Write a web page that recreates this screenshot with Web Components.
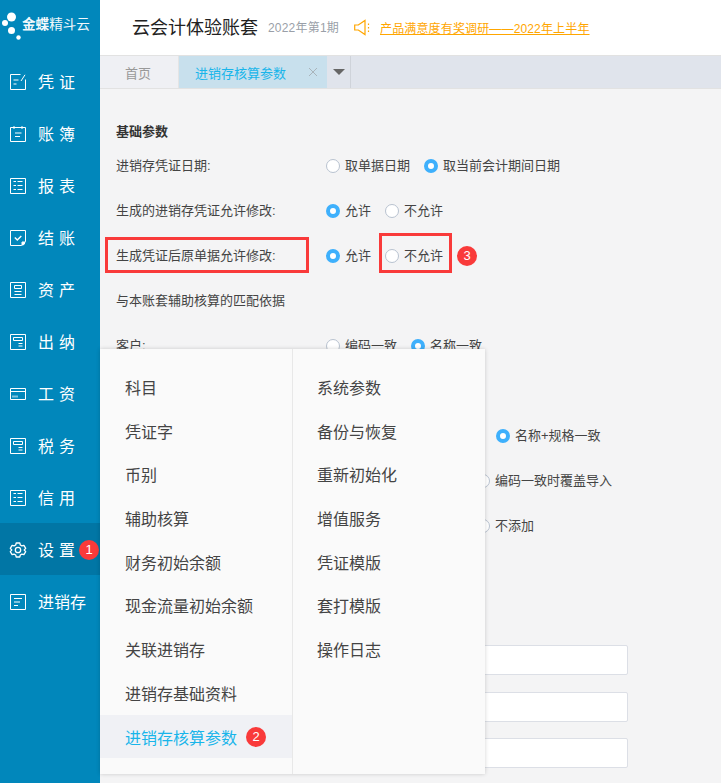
<!DOCTYPE html>
<html lang="zh">
<head>
<meta charset="utf-8">
<title>进销存核算参数</title>
<style>
html, body { margin: 0; height: 100%; }
body { font-family: "Liberation Sans", "Noto Sans CJK SC", sans-serif; overflow: hidden; }
</style>
</head>
<body>
<app-shell>
  <side-bar slot="side">
    <nav-item icon="edit">凭证</nav-item>
    <nav-item icon="book">账簿</nav-item>
    <nav-item icon="list">报表</nav-item>
    <nav-item icon="check">结账</nav-item>
    <nav-item icon="asset">资产</nav-item>
    <nav-item icon="cash">出纳</nav-item>
    <nav-item icon="card">工资</nav-item>
    <nav-item icon="cash">税务</nav-item>
    <nav-item icon="list">信用</nav-item>
    <nav-item icon="gear" active badge="1">设置</nav-item>
    <nav-item icon="lines" tight>进销存</nav-item>
  </side-bar>
  <top-bar slot="main"></top-bar>
  <tab-bar slot="main"></tab-bar>
  <param-form slot="main">
    <h-title>基础参数</h-title>
    <param-row label="进销存凭证日期:">
      <radio-opt>取单据日期</radio-opt>
      <radio-opt checked>取当前会计期间日期</radio-opt>
    </param-row>
    <param-row label="生成的进销存凭证允许修改:">
      <radio-opt checked>允许</radio-opt>
      <radio-opt>不允许</radio-opt>
    </param-row>
    <param-row label="生成凭证后原单据允许修改:" mark>
      <radio-opt checked>允许</radio-opt>
      <radio-opt mark>不允许</radio-opt>
      <num-badge>3</num-badge>
    </param-row>
    <param-row label="与本账套辅助核算的匹配依据"></param-row>
    <param-row label="客户:">
      <radio-opt>编码一致</radio-opt>
      <radio-opt checked>名称一致</radio-opt>
    </param-row>
    <param-row></param-row>
    <param-row indent="170">
      <radio-opt checked>名称+规格一致</radio-opt>
    </param-row>
    <param-row indent="150">
      <radio-opt>编码一致时覆盖导入</radio-opt>
    </param-row>
    <param-row indent="150">
      <radio-opt>不添加</radio-opt>
    </param-row>
    <input-stack></input-stack>
  </param-form>
  <setting-menu slot="over"></setting-menu>
</app-shell>

<script>
// iconos del menu lateral
const ICONS = {
  edit: '<path d="M10.500 .5H.5v15h15V5.500"/><path d="M15 .8 11 7"/><path d="M3.500 6h5M3.500 10h3"/>',
  book: '<path d="M.5 1.500h15v14H.5z"/><path d="M4 0v3M12 0v3M5 7h6.500M5 10.500h5"/>',
  list: '<path d="M.5 .5h15v15H.5z"/><path d="M3.500 3.500h2.500M7.500 3.500h5M3.500 7.500h2.500M7.500 7.500h5M3.500 11.500h2.500M7.500 11.500h5"/>',
  check: '<path d="M15.500 11.500V.5H.5v15h11z"/><path d="M12 15.500v-3.500h3.500" /><path d="M12.500 12.500h2v1.500l-1.500 1h-.5z" fill="#fff"/><path d="M4.800 7.500l2.500 2.500 4-4" stroke-width="1.400"/>',
  asset: '<path d="M.5 .5h15v15H.5z"/><path d="M4.500 3.500h7v3h-7zM4.500 9.500h7M4.500 12.500h7"/>',
  cash: '<path d="M.5 .5h15v15H.5z"/><path d="M3.500 3.500h9v3h-9zM8.500 9.500h4M8.500 12h4"/>',
  card: '<path d="M.5 2.500h15v11H.5z"/><path d="M.5 5.500h15"/><path d="M2.500 10.500h5.500" stroke-width="2" stroke-dasharray="1 1"/>',
  gear: '<path d="M6.200 1h3.600l.5 2 1.600.9 2-.6 1.800 3.100L14.200 8l1.500 1.600-1.800 3.100-2-.6-1.600.9-.5 2H6.200l-.5-2-1.600-.9-2 .6L.3 9.600 1.800 8 .3 6.400l1.800-3.100 2 .6 1.600-.9z" stroke-width="1.300" stroke-linejoin="round"/><circle cx="8" cy="8" r="2.700" stroke-width="1.300"/>',
  lines: '<path d="M.5 .5h15v15H.5z"/><path d="M4 4.500h8M4 8h6M4 11.500h4"/>'
};

class NumBadge extends HTMLElement {
  constructor() {
    super();
    this.attachShadow({mode: 'open'}).innerHTML = `
    <style>
      :host { display: inline-flex; width: 20px; height: 20px; border-radius: 50%; background: #f93a3a; color: #fff;
              align-items: center; justify-content: center; font-size: 13px; line-height: 20px; flex: none; }
    </style><slot></slot>`;
  }
}
/////////////////////////////////////////////////////////////////////
class AppShell extends HTMLElement {
  constructor() {
    super();
    this.attachShadow({mode: 'open'}).innerHTML = `
    <style>
      :host { display: grid; grid-template-columns: 100px 1fr; height: 783px; position: relative; overflow: hidden; background: #f4f4f5; }
      .main { display: flex; flex-direction: column; min-width: 0; }
    </style>
    <slot name="side"></slot>
    <div class="main"><slot name="main"></slot></div>
    <slot name="over"></slot>`;
  }
}
/////////////////////////////////////////////////////////////////////
class SideBar extends HTMLElement {
  constructor() {
    super();
    this.attachShadow({mode: 'open'}).innerHTML = `
    <style>
      :host { display: block; background: #0187bb; color: #fff; }
      .logo { height: 55px; display: flex; align-items: center; position: relative; }
      svg { position: absolute; left: 0; top: 8px; }
      .name { margin: 0 0 5px 22px; font-size: 13.600px; line-height: 16px; white-space: nowrap; color: #f2f9fc; }
      b { font-weight: 700; }
    </style>
    <div class="logo">
      <svg width="22" height="36" viewBox="0 0 22 36" fill="#fff">
        <circle cx="11.500" cy="9" r="4.500"/><circle cx="5" cy="15" r="3"/><circle cx="11.500" cy="22.500" r="3.500"/><circle cx="18.500" cy="29.500" r="2.200"/>
      </svg>
      <div class="name"><b>金蝶</b>精斗云</div>
    </div>
    <slot></slot>`;
  }
}

class NavItem extends HTMLElement {
  connectedCallback() {
    if (this.shadowRoot) return;
    const icon = ICONS[this.getAttribute('icon')] || '';
    const badge = this.getAttribute('badge');
    this.attachShadow({mode: 'open'}).innerHTML = `
    <style>
      :host { display: flex; align-items: center; height: 52px; position: relative; font-size: 16px; }
      :host([active]) { background: #0176a5; }
      svg { margin: 2px 0 0 10px; flex: none; fill: none; stroke: #fff; stroke-width: 1; overflow: visible; }
      .txt { margin-left: 12px; padding-top: 4px; letter-spacing: 5px; line-height: 20px; white-space: nowrap; }
      :host([tight]) .txt { letter-spacing: 0; }
      num-badge { position: absolute; left: 79px; top: 17px; }
    </style>
    <svg width="16" height="16" viewBox="0 0 16 16">${icon}</svg>
    <span class="txt"><slot></slot></span>
    ${badge ? `<num-badge>${badge}</num-badge>` : ''}`;
  }
}
/////////////////////////////////////////////////////////////////////
class TopBar extends HTMLElement {
  constructor() {
    super();
    this.attachShadow({mode: 'open'}).innerHTML = `
    <style>
      :host { display: flex; align-items: center; height: 55px; background: #fff; padding-left: 32px; flex: none; }
      .t { font-size: 18px; color: #222; line-height: 24px; }
      .p { font-size: 12px; color: #9a9fa8; margin-left: 10px; line-height: 16px; white-space: nowrap; letter-spacing: .2px; }
      svg { margin-left: 15px; flex: none; }
      a { margin-left: 9px; font-size: 12px; color: #ffa600; text-decoration: underline; white-space: nowrap; letter-spacing: .15px; }
    </style>
    <div class="t">云会计体验账套</div>
    <div class="p">2022年第1期</div>
    <svg width="17" height="17" viewBox="0 0 17 17" fill="none" stroke="#ffa600" stroke-width="1.200">
      <path d="M.7 6h3.600L11 1.500v14L4.300 11H.7z"/><path d="M14.500 4.500v1.500M14.500 8v1.500M14.500 11.500v1.500"/>
    </svg>
    <a>产品满意度有奖调研——2022年上半年</a>`;
  }
}

class TabBar extends HTMLElement {
  constructor() {
    super();
    this.attachShadow({mode: 'open'}).innerHTML = `
    <style>
      :host { display: flex; height: 32px; background: #e0e4ec; font-size: 13px; border-top: 1px solid #e2e2e2;
              border-bottom: 1px solid #e2e2e2; flex: none; box-sizing: content-box; }
      div { display: flex; align-items: center; }
      .home { width: 79px; background: #eff0f4; color: #999; padding-left: 25px; box-sizing: border-box; border-right: 1px solid #e4e4e4; }
      .cur { width: 148px; background: #c8e0ed; color: #19b5ea; padding-left: 16px; box-sizing: border-box; position: relative; }
      .x { position: absolute; left: 129px; top: 11px; width: 10px; height: 10px; }
      .arrow { width: 24px; justify-content: center; border-right: 1px solid #cfd3da; background: #e0e4ec; box-sizing: border-box; }
      .arrow i { border: 6px solid transparent; border-top: 6px solid #666; border-bottom: 0; }
    </style>
    <div class="home">首页</div>
    <div class="cur">进销存核算参数
      <svg class="x" viewBox="0 0 10 10" stroke="#a9b4bb" stroke-width="1" fill="none"><path d="M1 1l8 8M9 1l-8 8"/></svg>
    </div>
    <div class="arrow"><i></i></div>`;
  }
}
/////////////////////////////////////////////////////////////////////
class ParamForm extends HTMLElement {
  constructor() {
    super();
    this.attachShadow({mode: 'open'}).innerHTML = `
    <style>
      :host { display: block; padding: 33px 0 0 16px; color: #444; font-size: 13px; }
    </style><slot></slot>`;
  }
}

class HTitle extends HTMLElement {
  constructor() {
    super();
    this.attachShadow({mode: 'open'}).innerHTML = `
    <style>:host { display: block; height: 21px; line-height: 20px; font-weight: 700; font-size: 13px; color: #333; }</style><slot></slot>`;
  }
}

class ParamRow extends HTMLElement {
  connectedCallback() {
    if (this.shadowRoot) return;
    const label = this.getAttribute('label') || '';
    const indent = this.getAttribute('indent') || 0;
    this.attachShadow({mode: 'open'}).innerHTML = `
    <style>
      :host { display: flex; align-items: center; height: 45px; position: relative; white-space: nowrap; }
      .l { width: 210px; flex: none; line-height: 20px; }
      .o { display: flex; align-items: center; gap: 14px; padding-left: ${indent}px; }
      .box { position: absolute; left: -11px; top: 4px; width: 198px; height: 30px; border: 3px solid #f93a3a; }
    </style>
    <div class="l">${label}</div>
    <div class="o"><slot></slot></div>
    ${this.hasAttribute('mark') ? '<div class="box"></div>' : ''}`;
  }
}

class RadioOpt extends HTMLElement {
  constructor() {
    super();
    this.attachShadow({mode: 'open'}).innerHTML = `
    <style>
      :host { display: inline-flex; align-items: center; position: relative; line-height: 20px; }
      i { width: 14px; height: 14px; border-radius: 50%; box-sizing: border-box; border: 1px solid #b8c2d0; background: #fff; margin-right: 5px; flex: none; }
      :host([checked]) i { border: 4.500px solid #3eb0fc; }
      .box { display: none; position: absolute; left: -6px; top: -12.500px; width: 67px; height: 34px; border: 3px solid #f93a3a; }
      :host([mark]) .box { display: block; }
    </style>
    <i></i><slot></slot><div class="box"></div>`;
  }
}

class InputStack extends HTMLElement {
  constructor() {
    super();
    this.attachShadow({mode: 'open'}).innerHTML = `
    <style>
      :host { display: flex; flex-direction: column; gap: 16.500px; margin: 97px 0 0 210px; width: 302px; }
      div { height: 30px; box-sizing: border-box; background: #fff; border: 1px solid #dcdfe6; border-radius: 2px; }
    </style>
    <div></div><div></div><div></div>`;
  }
}
/////////////////////////////////////////////////////////////////////
class SettingMenu extends HTMLElement {
  constructor() {
    super();
    const left = ['科目','凭证字','币别','辅助核算','财务初始余额','现金流量初始余额','关联进销存','进销存基础资料'];
    const right = ['系统参数','备份与恢复','重新初始化','增值服务','凭证模版','套打模版','操作日志'];
    const li = t => `<li>${t}</li>`;
    this.attachShadow({mode: 'open'}).innerHTML = `
    <style>
      :host { display: grid; grid-template-columns: 193px 1fr; position: absolute; left: 100px; top: 349px; width: 385px; height: 425px;
              background: #fafafa; box-shadow: 0 0 4px rgba(0,0,0,.18); color: #444; font-size: 16px; }
      ul { list-style: none; margin: 0; padding: 16px 0 0; }
      ul.a { border-right: 1px solid #e8e8e8; }
      li { height: 43.700px; box-sizing: border-box; padding: 0 0 0 25px; white-space: nowrap; display: flex; align-items: center; }
      ul.b li { padding-left: 24px; }
      li.on { background: #f0f1f5; color: #19b5ea; padding-top: 1px; }
      num-badge { margin-left: 9px; }
    </style>
    <ul class="a">${left.map(li).join('')}<li class="on">进销存核算参数<num-badge>2</num-badge></li></ul>
    <ul class="b">${right.map(li).join('')}</ul>`;
  }
}
/////////////////////////////////////////////////////////////////////
customElements.define('num-badge', NumBadge);
customElements.define('app-shell', AppShell);
customElements.define('side-bar', SideBar);
customElements.define('nav-item', NavItem);
customElements.define('top-bar', TopBar);
customElements.define('tab-bar', TabBar);
customElements.define('param-form', ParamForm);
customElements.define('h-title', HTitle);
customElements.define('param-row', ParamRow);
customElements.define('radio-opt', RadioOpt);
customElements.define('input-stack', InputStack);
customElements.define('setting-menu', SettingMenu);
</script>
</body>
</html>
